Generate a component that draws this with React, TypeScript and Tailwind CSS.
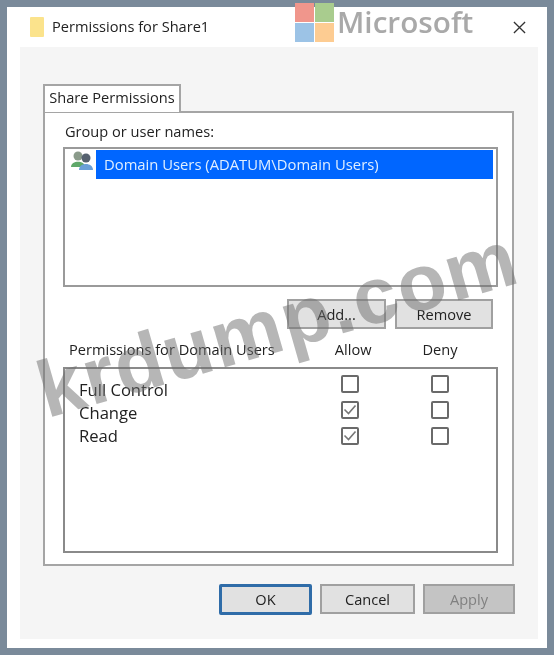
import React from "react";

const font = { fontFamily: '"Open Sans", "Noto Sans", sans-serif' };

function Box({ checked }: { checked?: boolean }) {
  return (
    <div className="w-[18px] h-[18px] border-2 border-[#6a6a6a] rounded-[2px] bg-white">
      {checked && (
        <svg viewBox="0 0 14 14" className="w-[14px] h-[14px]" fill="none" stroke="#777" strokeWidth="1.6">
          <path d="M1.5 6.5 L5.5 10.5 L12.5 2.5" />
        </svg>
      )}
    </div>
  );
}

function Btn({ children, className = "" }: { children: React.ReactNode; className?: string }) {
  return (
    <div className={`flex items-center justify-center shrink-0 bg-[#e1e1e1] border-2 border-[#a0a0a0] pt-px text-[14.6px] text-[#222] ${className}`}>
      {children}
    </div>
  );
}

export default function App() {
  return (
    <div className="relative w-[554px] h-[655px] overflow-hidden bg-[#7a8a9a] p-[7px] blur-[0.3px]" style={font}>
      <div className="flex flex-col w-[540px] h-[641px] bg-white">
        <div className="flex items-center h-[40px] shrink-0 pl-[23px] pr-[21px]">
          <div className="w-[14px] h-[20px] bg-[#fbe38c] rounded-[1px] mr-[8px]" />
          <span className="text-[14.6px] text-[#222]">Permissions for Share1</span>
          <svg viewBox="0 0 14 14" className="ml-auto w-[13px] h-[13px]" fill="none" stroke="#333" strokeWidth="1.4">
            <path d="M1 1 L13 13 M13 1 L1 13" />
          </svg>
        </div>
        <div className="flex flex-col flex-1 ml-[13px] mr-[9px] mb-[9px] bg-[#f5f5f5] pl-[23px] pr-[23px] pt-[37px]">
          <div className="relative z-10 flex items-center justify-center w-[138px] h-[28px] -mb-px bg-white border-2 border-b-0 border-[#a5a5a5] pb-[2px] text-[14.6px] text-[#222]">
            Share Permissions
          </div>
          <div className="flex flex-col w-[471px] h-[455px] bg-white border-2 border-[#a5a5a5] pl-[18px] pr-[14px]">
            <div className="h-[34px] pl-[2px] pt-[8px] leading-[20px] text-[14.6px] text-[#222]">Group or user names:</div>
            <div className="flex items-start h-[140px] border-2 border-[#9a9a9a] pt-px pl-[5px] pr-[3px]">
              <svg viewBox="0 0 24 22" className="w-[24px] h-[22px] shrink-0">
                <circle cx="8" cy="6" r="4.5" fill="#8a9a8a" />
                <path d="M1 17 C1 10 15 10 15 17 Z" fill="#5fa86a" />
                <circle cx="16" cy="8" r="4.5" fill="#55616f" />
                <path d="M9 20 C9 12 23 12 23 20 Z" fill="#6aa0d8" />
              </svg>
              <div className="flex items-center flex-1 h-[29px] ml-[2px] pl-[8px] pb-[1px] bg-[#0066ff] text-[14.8px] text-[#dfeeff]">
                Domain Users (ADATUM\Domain Users)
              </div>
            </div>
            <div className="flex justify-end gap-[9px] mt-[12px] pr-[5px]">
              <Btn className="w-[99px] h-[30px]">Add...</Btn>
              <Btn className="w-[98px] h-[30px]">Remove</Btn>
            </div>
            <div className="flex items-center h-[38px] pt-[4px] text-[14.6px] text-[#222]">
              <span className="ml-[6px]">Permissions for Domain Users</span>
              <span className="ml-[60px]">Allow</span>
              <span className="ml-[51px]">Deny</span>
            </div>
            <div className="flex h-[186px] border-2 border-[#8a8a8a] pr-[47px]">
              <div className="flex flex-col pl-[14px] pt-[9px] text-[16.6px] leading-[23px] text-[#222]">
                <span>Full Control</span>
                <span>Change</span>
                <span>Read</span>
              </div>
              <div className="ml-auto grid grid-cols-[18px_18px] gap-x-[72px] gap-y-[8px] pt-[6px] h-fit">
                <Box />
                <Box />
                <Box checked />
                <Box />
                <Box checked />
                <Box />
              </div>
            </div>
          </div>
          <div className="flex mt-[18px] ml-[176px] gap-[8px] items-start">
            <Btn className="w-[93px] h-[31px] border-[3px] rounded-[2px] !border-[#2f6ca8]">OK</Btn>
            <Btn className="w-[95px] h-[30px]">Cancel</Btn>
            <Btn className="w-[92px] h-[30px] !bg-[#c4c4c4] !text-[#808080]">Apply</Btn>
          </div>
        </div>
      </div>

      <div className="absolute left-[295px] top-[3px] grid grid-cols-[19px_19px] grid-rows-[19px_19px] gap-[1px]">
        <div className="bg-[#f0968c]" />
        <div className="bg-[#a9cc8e]" />
        <div className="bg-[#9cc3e6]" />
        <div className="bg-[#fdcc92]" />
      </div>
      <div className="absolute left-[337px] top-[0px] text-[29.7px] leading-[44px] font-semibold text-[#a9a9a9]">Microsoft</div>
      <div className="absolute left-[30px] top-[274px] text-[80px] leading-[100px] tracking-[1.5px] font-bold text-[#6e6e6e]/50 -rotate-[16deg] origin-center whitespace-nowrap" style={{ fontFamily: '"Liberation Sans", sans-serif' }}>
        krdump.com
      </div>
    </div>
  );
}
